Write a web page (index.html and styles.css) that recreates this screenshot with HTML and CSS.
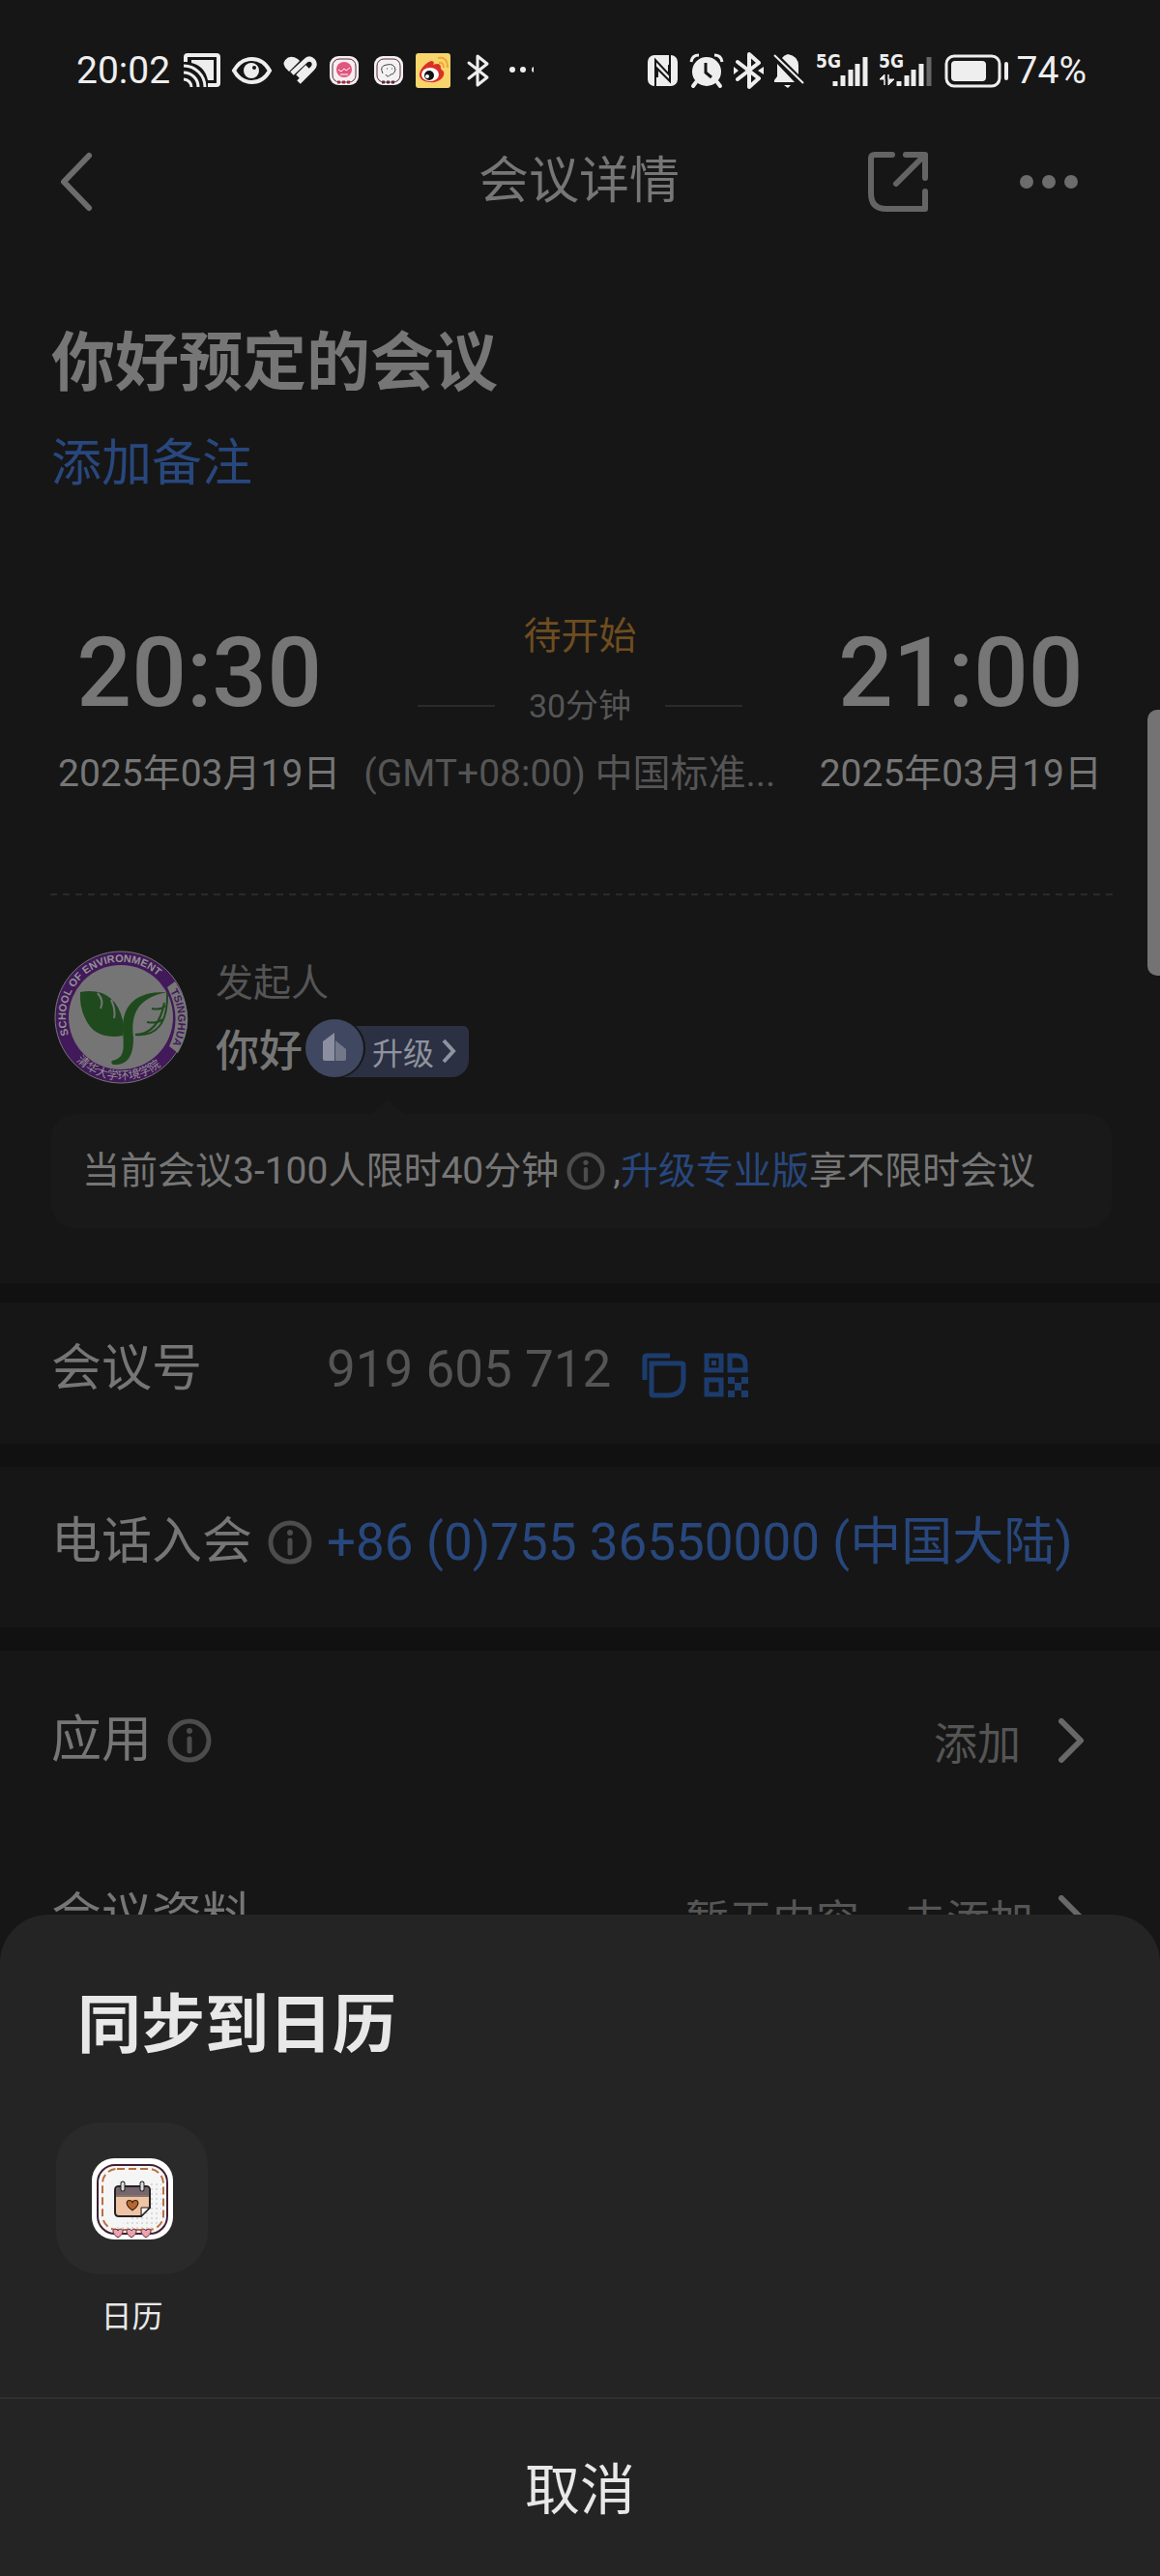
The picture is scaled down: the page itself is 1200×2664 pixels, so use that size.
FILE: index.html
```html
<!DOCTYPE html>
<html lang="zh-CN">
<head>
<meta charset="utf-8">
<meta name="viewport" content="width=device-width, initial-scale=1">
<title>会议详情</title>
<link rel="stylesheet" href="styles.css">
</head>
<body>
<svg class="defs" aria-hidden="true">
  <symbol id="info" viewBox="0 0 46 46">
    <circle cx="23" cy="23" r="20" fill="none" stroke="currentColor" stroke-width="5"/>
    <circle cx="23" cy="13" r="3" fill="currentColor"/>
    <path d="M23 21v13" stroke="currentColor" stroke-width="5" stroke-linecap="round"/>
  </symbol>
  <symbol id="chevron" viewBox="0 0 28 46">
    <path d="M3 3l20 20L3 43" fill="none" stroke="currentColor" stroke-width="6" stroke-linecap="round" stroke-linejoin="round"/>
  </symbol>
  <symbol id="heart" viewBox="0 0 12 11">
    <path d="M6 10C3 8 1 6 1 3.500C1 .5 5 .5 6 3C7 .5 11 .5 11 3.500C11 6 9 8 6 10Z"/>
  </symbol>
</svg>
<div class="app">
  <div class="statusbar">
    <span class="clock">20:02</span>
    <div class="icons">
      <svg width="38" height="38" viewBox="0 0 38 38"><path d="M2 10V5q0-2 2-2h30q2 0 2 2v27q0 2-2 2h-9" fill="none" stroke="#eee" stroke-width="4"/><path d="M8 8h23v21h-6C23 19 17 13 8 11z" fill="#eee"/><path d="M0 14a22 22 0 0 1 22 22M0 21a15 15 0 0 1 15 15M0 28a8 8 0 0 1 8 8" fill="none" stroke="#eee" stroke-width="3"/></svg>
      <svg width="41" height="38" viewBox="0 0 41 38"><path d="M2 19C11 3 30 3 39 19C30 35 11 35 2 19Z" fill="none" stroke="#eee" stroke-width="4"/><circle cx="20" cy="19" r="8" fill="#eee"/><circle cx="23" cy="16" r="2" fill="#161616"/></svg>
      <svg width="36" height="38" viewBox="0 0 36 38"><path d="M5 19Q-2 13 2 8Q7 2 15 7L17 9L6 20Z" fill="#eee"/><path d="M9 22L23 9Q27 5 31 9Q34 13 30 17L16 31M15 25L25 15" fill="none" stroke="#eee" stroke-width="5"/></svg>
      <svg width="34" height="38" viewBox="0 0 34 38"><rect y="4" width="30" height="30" rx="9" fill="#f6eef0"/><rect x="3" y="7" width="24" height="24" rx="7" fill="none" stroke="#5b2a3c" stroke-width="1"/><circle cx="15" cy="18" r="8" fill="#e0567d"/><path d="M9 18l3 2 3-3 2 2 4-3M11 23h8" stroke="#fff" stroke-width="1" fill="none"/><path d="M8 31h14" stroke="#a02b4b" stroke-width="3" stroke-dasharray="3 2"/></svg>
      <svg width="31" height="38" viewBox="0 0 31 38"><rect y="4" width="30" height="30" rx="9" fill="#f3f1f2"/><rect x="3" y="7" width="24" height="24" rx="7" fill="none" stroke="#5b2a3c" stroke-width="1"/><path d="M9 22Q5 14 13 13Q21 11 22 18Q21 23 17 23Q14 27 12 23M13 17h1M18 17h1" fill="none" stroke="#444" stroke-width="1"/><path d="M8 31h14" stroke="#5b2a3c" stroke-width="3" stroke-dasharray="3 2"/></svg>
      <svg width="41" height="38" viewBox="0 0 41 38"><rect y="1" width="36" height="36" rx="3" fill="#f8d66c"/><path d="M4 22C5 16 13 9 17 9Q20 10 18 13Q25 10 26 15Q25 17 29 20C31 27 22 32 15 31C8 31 3 27 4 22Z" fill="#db3027"/><ellipse cx="15" cy="23" rx="9" ry="7" fill="#fff"/><circle cx="14" cy="24" r="5" fill="#111"/><circle cx="12" cy="25" r="2" fill="#fff"/><path d="M23 6Q33 4 33 16M24 11Q29 10 29 16" fill="none" stroke="#f0a63c" stroke-width="2"/></svg>
      <svg width="32" height="38" viewBox="0 0 32 38"><path d="M2 11L21 26L11 34V4L21 12L2 27" fill="none" stroke="#eee" stroke-width="3" stroke-linejoin="round" stroke-linecap="round"/></svg>
      <svg width="25" height="38" viewBox="0 0 25 38"><circle cx="3" cy="18" r="3" fill="#eee"/><circle cx="14" cy="18" r="3" fill="#eee"/><circle cx="26" cy="18" r="3" fill="#eee"/></svg>
    </div>
    <div class="icons right">
      <svg width="32" height="38" viewBox="0 0 32 38"><rect y="3" width="31" height="32" rx="7" fill="#eee"/><path d="M8 35V8L22 23V13M23 3V30L10 17V26" fill="none" stroke="#161616" stroke-width="2"/></svg>
      <svg width="33" height="38" viewBox="0 0 33 38"><circle cx="17" cy="20" r="15" fill="#eee"/><path d="M1 10Q2 3 9 3M33 10Q32 3 25 3" stroke="#eee" stroke-width="3" fill="none"/><path d="M6 31l-3 4M28 31l3 4" stroke="#eee" stroke-width="4" stroke-linecap="round"/><path d="M16 11v10l6 5" fill="none" stroke="#161616" stroke-width="3"/></svg>
      <svg width="29" height="38" viewBox="0 0 29 38"><path d="M4 10L26 27L16 36V2L26 11L4 28" fill="none" stroke="#eee" stroke-width="4" stroke-linejoin="round" stroke-linecap="round"/><path d="M0 15l5 4-5 4zM31 15l-6 4 6 4z" fill="#eee"/></svg>
      <svg width="32" height="38" viewBox="0 0 32 38"><path d="M1 31V29L4 25V12L22 31ZM9 6Q11 3 15 2Q26 4 26 14V23Z" fill="#eee"/><path d="M1 3L31 32" stroke="#eee" stroke-width="2"/><path d="M11 34h7l-3 3z" fill="#eee"/></svg>
      <svg width="53" height="38" viewBox="0 0 53 38"><text class="net" x="0" y="16">5G</text><path d="M20 30v5M28 24v11M36 18v17M43 12v23M51 5v30" stroke="#eee" stroke-width="5" stroke-linecap="butt"/></svg>
      <svg width="56" height="38" viewBox="0 0 56 38"><text class="net" x="0" y="16">5G</text><path d="M21 30v5M29 24v11M36 18v17M44 12v23" stroke="#eee" stroke-width="5"/><path d="M52 5v30" stroke="#666" stroke-width="5"/><path d="M6 34V23L1 28h5zM10 23V34L16 28h-6z" fill="#eee" stroke="#eee" stroke-width="1"/></svg>
      <svg width="67" height="38" viewBox="0 0 67 38"><rect x="2" y="4" width="55" height="31" rx="8" fill="none" stroke="#eee" stroke-width="3"/><rect x="7" y="9" width="36" height="21" rx="4" fill="#eee"/><path d="M64 12v15" stroke="#eee" stroke-width="4" stroke-linecap="round"/></svg>
    </div>
    <span class="battery">74%</span>
  </div>

  <header class="nav">
    <button class="icon-btn" aria-label="返回"><svg width="36" height="62" viewBox="0 0 36 62"><path d="M31 4L5 31L31 58" fill="none" stroke="#6c6c6c" stroke-width="6" stroke-linecap="round" stroke-linejoin="round"/></svg></button>
    <h1>会议详情</h1>
    <div class="actions">
      <button class="icon-btn" aria-label="分享"><svg width="64" height="64" viewBox="0 0 64 64"><path d="M26 4H8Q4 4 4 8V44Q4 60 20 60H60V42M40 4H60V28M59 5L30 34" fill="none" stroke="#646464" stroke-width="6" stroke-linejoin="round" stroke-linecap="round"/></svg></button>
      <button class="icon-btn" aria-label="更多"><svg width="60" height="64" viewBox="0 0 60 64"><g fill="#6c6c6c"><circle cx="7" cy="32" r="7"/><circle cx="30" cy="32" r="7"/><circle cx="53" cy="32" r="7"/></g></svg></button>
    </div>
  </header>

  <main>
    <section class="panel summary">
      <h2>你好预定的会议</h2>
      <a class="note" href="#">添加备注</a>
      <div class="schedule">
        <div class="when"><time class="hour">20:30</time><span class="date">2025年03月19日</span></div>
        <div class="between">
          <span class="state">待开始</span>
          <span class="length">30分钟</span>
          <span class="zone">(GMT+08:00) 中国标准...</span>
        </div>
        <div class="when"><time class="hour">21:00</time><span class="date">2025年03月19日</span></div>
      </div>
      <svg class="dashes" height="2"><path d="M0 1H2000" stroke="#2a2a2a" stroke-width="2" stroke-dasharray="7 6"/></svg>
      <div class="host">
        <svg class="avatar" width="138" height="138" viewBox="0 0 138 138">
          <defs>
            <path id="ring-top" d="M15 87A57 57 0 1 1 123 87"/>
            <path id="ring-right" d="M120 42A58 58 0 0 1 121 100"/>
            <path id="ring-low" d="M23 114A65 65 0 0 0 122 107"/>
          </defs>
          <circle cx="69" cy="69" r="68" fill="#42195a" stroke="#777" stroke-width="1"/>
          <circle cx="69" cy="69" r="54" fill="#757575"/>
          <path d="M117 38L125 32Q150 69 128 106L119 99Q133 69 117 38Z" fill="#777"/>
          <text class="ring"><textPath href="#ring-top">SCHOOL OF ENVIRONMENT</textPath></text>
          <text class="ring purple"><textPath href="#ring-right">TSINGHUA</textPath></text>
          <text class="ring cn"><textPath href="#ring-low">清华大学环境学院</textPath></text>
          <path d="M27 43Q62 37 71 72L71 88Q42 93 32 70Q26 58 27 43Z" fill="#1f4a1d"/>
          <path d="M45 44Q52 52 48 60M59 51Q64 62 62 70" fill="none" stroke="#757575" stroke-width="2"/>
          <path d="M117 43C86 42 72 55 71 78C71 96 76 111 60 114Q58 116 61 118C77 119 82 108 82 90C79 66 86 49 117 43Z" fill="#1f4a1d"/>
          <path d="M117 44Q118 90 84 87Q108 86 114 54M101 60Q110 62 115 57M96 74Q107 76 112 71" fill="none" stroke="#1f4a1d" stroke-width="2"/>
        </svg>
        <div class="who">
          <span class="role">发起人</span>
          <div class="name-row">
            <span class="name">你好</span>
            <button class="upgrade">
              <svg class="medal" width="62" height="60" viewBox="0 0 62 60"><circle cx="31" cy="30" r="31" fill="#161616"/><circle cx="30" cy="30" r="30" fill="#404760"/><path d="M18 23L30 14V43H20Q18 43 18 41Z" fill="#8b8f9f"/><path d="M31 22L42 31V41Q42 43 40 43H31Z" fill="#737889"/></svg>
              <span class="tag">升级<svg width="16" height="26" viewBox="0 0 16 26"><path d="M3 2L13 13L3 24" fill="none" stroke="#8f939f" stroke-width="4"/></svg></span>
            </button>
          </div>
        </div>
      </div>
      <p class="tip">当前会议3-100人限时40分钟<svg class="tip-info" width="40" height="40"><use href="#info"/></svg>,<a href="#">升级专业版</a>享不限时会议</p>
    </section>

    <section class="panel row number">
      <span class="label">会议号</span>
      <span class="value">919 605 712</span>
      <button class="icon-btn small" aria-label="复制"><svg width="46" height="46" viewBox="0 0 46 46"><path d="M3 28V5Q3 3 5 3H29M10 11H41Q43 11 43 13V27Q43 44 27 44H12Q10 44 10 42Z" fill="none" stroke="#1c3c6e" stroke-width="5"/></svg></button>
      <button class="icon-btn small" aria-label="二维码"><svg width="46" height="46" viewBox="0 0 46 46"><g fill="none" stroke="#1c3c6e" stroke-width="5"><rect x="3" y="3" width="15" height="15"/><path d="M27 3H34Q43 3 43 12V18H27Z"/><rect x="3" y="28" width="15" height="15"/></g><path d="M8 8h5v5H8zM25 25h7v6h7v-6h7v7h-7v7h7v7h-7v-7h-7v7h-7v-7h7v-7h-7z" fill="#1c3c6e"/></svg></button>
    </section>

    <section class="panel row phone">
      <span class="label">电话入会<svg width="46" height="46"><use href="#info"/></svg></span>
      <a class="value" href="#">+86 (0)755 36550000 (中国大陆)</a>
    </section>

    <section class="panel more">
      <div class="row">
        <span class="label">应用<svg width="46" height="46"><use href="#info"/></svg></span>
        <a class="go" href="#">添加<svg width="28" height="46"><use href="#chevron"/></svg></a>
      </div>
      <div class="row">
        <span class="label">会议资料</span>
        <a class="go near" href="#">暂无内容，去添加<svg width="28" height="46"><use href="#chevron"/></svg></a>
      </div>
    </section>
  </main>

  <div class="scrollbar"></div>

  <div class="sheet" role="dialog" aria-labelledby="sheet-title">
    <h2 id="sheet-title">同步到日历</h2>
    <button class="target">
      <span class="tile">
        <svg width="84" height="84" viewBox="0 0 84 84">
          <defs><pattern id="dots" width="5" height="5" patternUnits="userSpaceOnUse"><circle cx="2" cy="2" r="1" fill="#cdd2d8"/></pattern></defs>
          <rect width="84" height="84" rx="23" fill="#fff"/>
          <rect x="6" y="7" width="72" height="71" rx="18" fill="#f6f5f5" stroke="#3f2233" stroke-width="2"/>
          <path d="M72 22V56Q70 73 55 73H22Q50 62 58 26Z" fill="url(#dots)"/>
          <rect x="11" y="11" width="63" height="63" rx="15" fill="none" stroke="#b9703f" stroke-width="2" stroke-dasharray="8 4"/>
          <path d="M24 33Q24 29 28 29H56Q60 29 60 33V51L51 60H28Q24 60 24 56Z" fill="#efc3a5" stroke="#222" stroke-width="2"/>
          <path d="M25 38V33Q25 30 28 30H56Q59 30 59 33V38Z" fill="#75666f"/>
          <path d="M24 39H60M51 60V51H60" fill="none" stroke="#222" stroke-width="1"/>
          <path d="M52 58V52H58Z" fill="#fff"/>
          <path d="M32 26v6M52 26v6" stroke="#222" stroke-width="5" stroke-linecap="round"/>
          <path d="M32 26v6M52 26v6" stroke="#ddd" stroke-width="3" stroke-linecap="round"/>
          <use href="#heart" x="35" y="42" width="14" height="13" fill="#b8672f" stroke="#3a2015"/>
          <g fill="#eba3ad" stroke="#5b2638"><use href="#heart" x="21" y="72" width="12" height="11"/><use href="#heart" x="35" y="72" width="12" height="11"/><use href="#heart" x="50" y="72" width="12" height="11"/></g>
        </svg>
      </span>
      日历
    </button>
    <button class="cancel">取消</button>
  </div>
</div>
</body>
</html>
```
FILE: styles.css
```css
* { box-sizing: border-box; }

body {
  margin: 0;
  background: #111;
  color: #767676;
  font-family: Roboto, "Noto Sans CJK SC", sans-serif;
  font-size: 39px;
}

h1, h2, p { margin: 0; }
a { text-decoration: none; color: #28477d; }
button { padding: 0; border: 0; background: none; color: inherit; font: inherit; cursor: pointer; }
svg { display: block; flex: none; overflow: visible; }
.defs { display: none; }

.app {
  position: relative;
  display: flex;
  flex-direction: column;
  min-height: 100vh;
  overflow: hidden;
}

/* Status bar */
.statusbar {
  display: flex;
  align-items: center;
  height: 110px;
  padding: 36px 76px 0 79px;
  background: #161616;
  color: #eee;
}
.icons { display: flex; gap: 12px; margin-left: 14px; }
.icons svg:nth-last-child(1) { overflow: hidden; }
.icons.right { margin-left: auto; }
.battery { margin-left: 8px; }
.net { fill: #eee; font: bold 19px "Liberation Sans Narrow", "DejaVu Sans Condensed", sans-serif; }

/* Navigation */
.nav {
  display: grid;
  grid-template-columns: 1fr auto 1fr;
  align-items: center;
  height: 156px;
  padding: 0 85px 0 61px;
  background: #161616;
}
.nav h1 { font-size: 52px; font-weight: 400; margin-left: 22px; line-height: 64px; }
.icon-btn { display: block; }
.nav > .icon-btn { justify-self: start; }
.actions { display: flex; justify-content: flex-end; gap: 94px; }

main { flex: 1; display: flex; flex-direction: column; gap: 24px; }
.panel { background: #161616; }

/* Meeting summary */
.summary { padding: 70px 0 57px; }
.summary h2 { padding: 0 53px; font-size: 66px; line-height: 80px; font-weight: 700; }
.note { display: block; margin: 32px 53px 0; font-size: 52px; line-height: 64px; }

.schedule {
  display: grid;
  grid-template-columns: auto 1fr auto;
  align-items: end;
  column-gap: 24px;
  margin-top: 122px;
  padding: 0 60px;
}
.when { display: flex; flex-direction: column; align-items: center; gap: 20px; }
.hour { font-size: 100px; line-height: 112px; font-weight: 500; }
.date, .zone { line-height: 56px; white-space: nowrap; }
.between { display: flex; flex-direction: column; align-items: center; min-width: 0; }
.state { line-height: 48px; color: #6f4d20; }
.length {
  display: flex;
  align-items: center;
  gap: 35px;
  margin: 24px 0 18px;
  font-size: 34px;
  line-height: 48px;
  color: #555;
}
.length::before, .length::after { content: ""; width: 80px; height: 2px; background: #2a2a2a; }
.zone { align-self: stretch; color: #555; }

.dashes { display: block; width: calc(100% - 95px); margin: 96px 43px 57px 52px; overflow: hidden; }

.host { display: flex; align-items: center; gap: 29px; padding: 0 56px; }
.ring { fill: #929292; font: bold 11px "Liberation Sans", sans-serif; }
.ring.purple { fill: #42195a; }
.ring.cn { font: 12px "Noto Sans CJK SC", sans-serif; }
.who { display: flex; flex-direction: column; gap: 13px; padding-top: 2px; }
.role { line-height: 48px; color: #555; }
.name-row { display: flex; align-items: center; gap: 3px; height: 60px; }
.name { font-size: 45px; font-weight: 500; }
.upgrade { display: flex; align-items: flex-end; }
.medal { z-index: 1; }
.tag {
  display: flex;
  align-items: center;
  gap: 7px;
  height: 53px;
  margin-left: -28px;
  padding: 0 13px 0 35px;
  border-radius: 4px 6px 18px 4px;
  background: #2b3042;
  color: #8f939f;
  font-size: 32px;
}

.tip {
  position: relative;
  display: flex;
  align-items: center;
  margin: 31px 50px 0 53px;
  padding: 30px 32px;
  border-radius: 24px;
  background: #191919;
  line-height: 58px;
  white-space: nowrap;
}
.tip::before {
  content: "";
  position: absolute;
  left: 331px;
  bottom: 100%;
  border: solid transparent;
  border-width: 0 17px 15px;
  border-bottom-color: #191919;
}
.tip-info { margin: 0 8px; color: #4c4c4c; }

/* Detail rows */
.row { display: flex; align-items: center; padding: 0 77px 0 53px; }
.label { display: flex; align-items: center; gap: 16px; font-size: 52px; line-height: 64px; white-space: nowrap; }
.label svg { color: #4c4c4c; }
.value { font-size: 53px; line-height: 64px; white-space: nowrap; }
.number { height: 146px; padding-bottom: 9px; margin-top: -4px; color: #767676; }
.number .value { color: #555; }
.number .label, .phone .label { width: 285px; }
.phone { height: 166px; padding-bottom: 11px; }
.small { margin: 12px 0 0 18px; }
.value + .small { margin-left: 32px; }
.more { flex: 1; }
.more .row { height: 183px; padding-top: 3px; }
.go { display: flex; align-items: center; gap: 39px; margin-left: auto; font-size: 45px; color: #555; }
.go.near { gap: 26px; }
.go svg { color: #686868; }

.scrollbar {
  position: absolute;
  top: 734px;
  right: 0;
  width: 13px;
  height: 275px;
  border-radius: 10px 0 0 10px;
  background: #737373;
}

/* Bottom sheet */
.sheet {
  position: absolute;
  left: 0;
  right: 0;
  bottom: 0;
  display: flex;
  flex-direction: column;
  align-items: flex-start;
  border-radius: 50px 50px 0 0;
  background: #242424;
  color: #e8e8e8;
}
.sheet h2 { margin: 75px 80px 60px; font-size: 66px; line-height: 80px; font-weight: 700; }
.target {
  display: flex;
  flex-direction: column;
  align-items: center;
  gap: 20px;
  margin: 0 58px 59px;
  font-size: 32px;
  line-height: 48px;
}
.tile {
  display: grid;
  place-items: center;
  width: 157px;
  height: 157px;
  border-radius: 45px;
  background: #2a2a2a;
}
.cancel {
  align-self: stretch;
  height: 185px;
  padding-bottom: 6px;
  border-top: 2px solid #2f2f2f;
  font-size: 57px;
}
```
